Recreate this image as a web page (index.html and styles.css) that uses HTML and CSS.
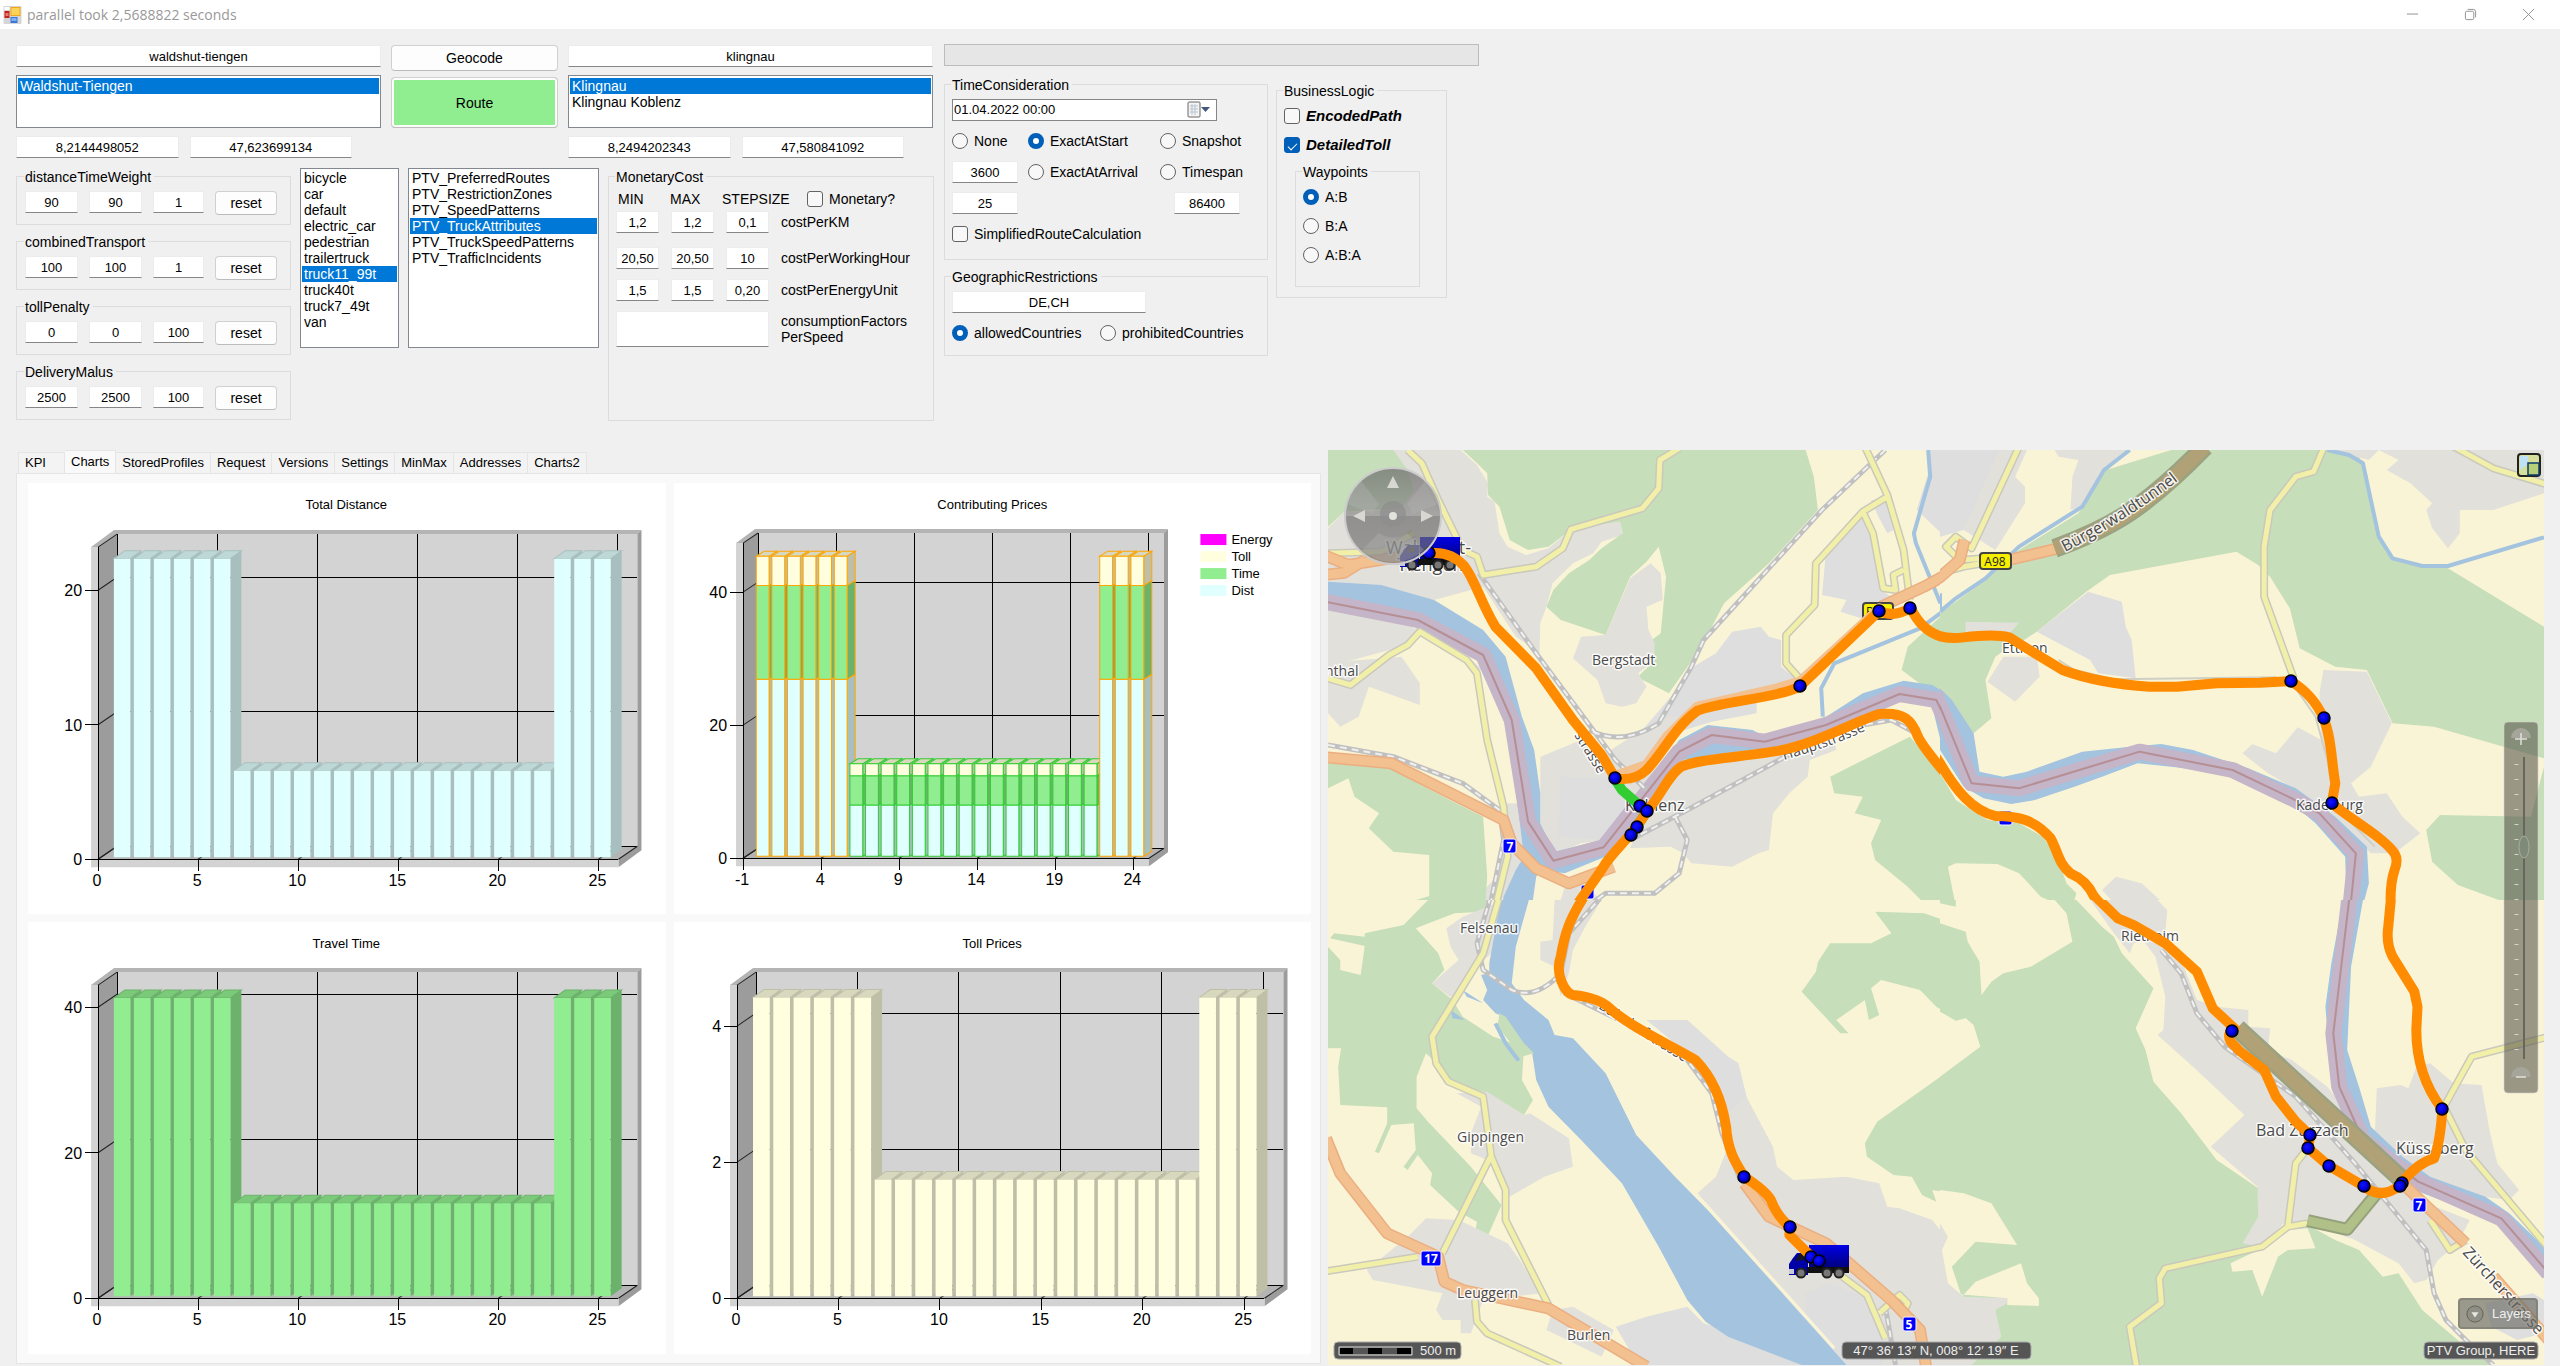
FILE: index.html
```html
<!DOCTYPE html>
<html lang="en">
<head>
<meta charset="utf-8">
<title>parallel took 2,5688822 seconds</title>
<link rel="stylesheet" href="styles.css">
</head>
<body>
<header class="titlebar">
  <svg class="app-icon" viewBox="0 0 18 18" aria-hidden="true">
    <rect x="0" y="0" width="18" height="18" rx="1" fill="#d5d5d5"/>
    <rect x="1" y="1" width="5" height="3" fill="#fff"/>
    <rect x="7" y="1" width="10" height="9" fill="#f0a818"/><rect x="8" y="2" width="8" height="7" fill="#fbd35b"/>
    <rect x="1" y="5" width="5" height="7" fill="#c0241c"/><rect x="2" y="7" width="3" height="3" fill="#ef7a6c"/>
    <rect x="7" y="11" width="7" height="6" fill="#3c76d8"/><rect x="8" y="12" width="5" height="3" fill="#7fb0f4"/>
  </svg>
  <h1 class="title">parallel took 2,5688822 seconds</h1>
  <div class="window-buttons">
    <button type="button" aria-label="Minimize"><svg viewBox="0 0 14 14"><path d="M1 6.500h12"/></svg></button>
    <button type="button" aria-label="Restore"><svg viewBox="0 0 14 14"><rect x="1.500" y="3.500" width="9" height="9" rx="1.500"/><path d="M4 1.500h6a2.500 2.500 0 0 1 2.500 2.500v6"/></svg></button>
    <button type="button" aria-label="Close"><svg viewBox="0 0 14 14"><path d="M1 1l12 12M13 1L1 13"/></svg></button>
  </div>
</header>

<form class="controls">
  <div class="inputs">
    <div class="places">
      <div class="place">
        <input class="box" aria-label="Start" value="waldshut-tiengen">
        <select class="list place-list" size="3" aria-label="Start results"><option selected>Waldshut-Tiengen</option></select>
        <div class="coords"><input class="box" aria-label="Start longitude" value="8,2144498052"><input class="box" aria-label="Start latitude" value="47,623699134"></div>
      </div>
      <div class="actions">
        <button type="button" class="btn">Geocode</button>
        <button type="button" class="btn route">Route</button>
      </div>
      <div class="place">
        <input class="box" aria-label="Destination" value="klingnau">
        <select class="list place-list" size="3" aria-label="Destination results"><option selected>Klingnau</option><option>Klingnau Koblenz</option></select>
        <div class="coords"><input class="box" aria-label="Destination longitude" value="8,2494202343"><input class="box" aria-label="Destination latitude" value="47,580841092"></div>
      </div>
    </div>
    <div class="profile">
      <div class="weights">
        <fieldset><legend>distanceTimeWeight</legend><div class="weight"><input class="box" aria-label="min" value="90"><input class="box" aria-label="max" value="90"><input class="box" aria-label="step" value="1"><button type="button" class="btn reset">reset</button></div></fieldset>
        <fieldset><legend>combinedTransport</legend><div class="weight"><input class="box" aria-label="min" value="100"><input class="box" aria-label="max" value="100"><input class="box" aria-label="step" value="1"><button type="button" class="btn reset">reset</button></div></fieldset>
        <fieldset><legend>tollPenalty</legend><div class="weight"><input class="box" aria-label="min" value="0"><input class="box" aria-label="max" value="0"><input class="box" aria-label="step" value="100"><button type="button" class="btn reset">reset</button></div></fieldset>
        <fieldset><legend>DeliveryMalus</legend><div class="weight"><input class="box" aria-label="min" value="2500"><input class="box" aria-label="max" value="2500"><input class="box" aria-label="step" value="100"><button type="button" class="btn reset">reset</button></div></fieldset>
      </div>
      <select class="list tall vehicles" size="11" aria-label="Vehicle profile">
        <option>bicycle</option><option>car</option><option>default</option><option>electric_car</option><option>pedestrian</option><option>trailertruck</option><option selected>truck11_99t</option><option>truck40t</option><option>truck7_49t</option><option>van</option>
      </select>
      <select class="list tall layers-list" size="11" aria-label="Feature layers">
        <option>PTV_PreferredRoutes</option><option>PTV_RestrictionZones</option><option>PTV_SpeedPatterns</option><option selected>PTV_TruckAttributes</option><option>PTV_TruckSpeedPatterns</option><option>PTV_TrafficIncidents</option>
      </select>
      <fieldset class="monetary"><legend>MonetaryCost</legend>
        <div class="cost-head"><span>MIN</span><span>MAX</span><span class="step">STEPSIZE</span><label class="check"><input type="checkbox">Monetary?</label></div>
        <div class="cost first"><input class="box" aria-label="cost per km min" value="1,2"><input class="box" aria-label="cost per km max" value="1,2"><input class="box" aria-label="cost per km step" value="0,1"><span>costPerKM</span></div>
        <div class="cost"><input class="box" aria-label="cost per hour min" value="20,50"><input class="box" aria-label="cost per hour max" value="20,50"><input class="box" aria-label="cost per hour step" value="10"><span>costPerWorkingHour</span></div>
        <div class="cost"><input class="box" aria-label="energy min" value="1,5"><input class="box" aria-label="energy max" value="1,5"><input class="box" aria-label="energy step" value="0,20"><span>costPerEnergyUnit</span></div>
        <div class="cost"><textarea class="box factors" id="factors"></textarea><label for="factors">consumptionFactors<br>PerSpeed</label></div>
      </fieldset>
    </div>
  </div>

  <div class="options">
    <div class="progress" role="progressbar" aria-label="Progress"></div>
    <div class="option-columns">
      <div class="option-stack">
        <fieldset><legend>TimeConsideration</legend>
          <div class="time-grid">
            <div class="date"><input aria-label="Start time" value="01.04.2022 00:00">
              <button type="button" aria-label="Open calendar"><svg viewBox="0 0 26 18"><rect x="1" y="1" width="12" height="15" rx="1" fill="#f4f4f4" stroke="#6d6866"/><path d="M3 5h8M3 8h8M3 11h8M5 3v11M8 3v11" stroke="#b9c3cf" fill="none"/><path d="M14 6h9l-4.500 5z" fill="#44587c"/></svg></button></div>
            <label class="check"><input type="radio" name="time">None</label>
            <label class="check"><input type="radio" name="time" checked>ExactAtStart</label>
            <label class="check"><input type="radio" name="time">Snapshot</label>
            <input class="box" aria-label="Duration" value="3600">
            <label class="check"><input type="radio" name="time">ExactAtArrival</label>
            <label class="check"><input type="radio" name="time">Timespan</label>
            <input class="box" aria-label="Count" value="25">
            <input class="box span-value" aria-label="Timespan seconds" value="86400">
            <label class="check wide"><input type="checkbox">SimplifiedRouteCalculation</label>
          </div>
        </fieldset>
        <fieldset><legend>GeographicRestrictions</legend>
          <div class="geo">
            <input class="box" aria-label="Countries" value="DE,CH">
            <div class="geo-row"><label class="check"><input type="radio" name="geo" checked>allowedCountries</label><label class="check"><input type="radio" name="geo">prohibitedCountries</label></div>
          </div>
        </fieldset>
      </div>
      <fieldset class="business"><legend>BusinessLogic</legend>
        <div class="stack">
          <label class="check strong"><input type="checkbox">EncodedPath</label>
          <label class="check strong"><input type="checkbox" checked>DetailedToll</label>
          <fieldset class="waypoints"><legend>Waypoints</legend>
            <div class="stack">
              <label class="check"><input type="radio" name="way" checked>A:B</label>
              <label class="check"><input type="radio" name="way">B:A</label>
              <label class="check"><input type="radio" name="way">A:B:A</label>
            </div>
          </fieldset>
        </div>
      </fieldset>
    </div>
  </div>
</form>

<main class="results">
  <section class="tabs">
    <div class="tablist" role="tablist">
      <button type="button" role="tab" class="kpi">KPI</button><button type="button" role="tab" class="active" aria-selected="true">Charts</button><button type="button" role="tab">StoredProfiles</button><button type="button" role="tab">Request</button><button type="button" role="tab">Versions</button><button type="button" role="tab">Settings</button><button type="button" role="tab">MinMax</button><button type="button" role="tab">Addresses</button><button type="button" role="tab">Charts2</button>
    </div>
    <div class="tabpage" role="tabpanel">
      <svg class="chart" id="distance" viewBox="0 0 637 431"></svg>
      <svg class="chart" id="prices" viewBox="0 0 637 431"></svg>
      <svg class="chart" id="time" viewBox="0 0 637 431"></svg>
      <svg class="chart" id="toll" viewBox="0 0 637 431"></svg>
    </div>
  </section>

  <section class="map-pane">
  <svg class="map" viewBox="0 0 1216 915" role="img" aria-label="Map of Koblenz and surroundings">
    <defs>
      <radialGradient id="ball" cx=".4" cy=".4" r=".6"><stop offset="0" stop-color="#1212ff"/><stop offset=".6" stop-color="#0000e0"/><stop offset="1" stop-color="#000060"/></radialGradient>
      <linearGradient id="trailer" x1="0" y1="0" x2="0" y2="1"><stop offset="0" stop-color="#0000e6"/><stop offset="1" stop-color="#000080"/></linearGradient>
      <linearGradient id="glass" x1="0" y1="0" x2="0" y2="1"><stop offset="0" stop-color="#666"/><stop offset=".5" stop-color="#8a8a8a"/><stop offset=".5" stop-color="#6a6a6a"/><stop offset="1" stop-color="#777"/></linearGradient>
      <g id="dot"><circle r="6" fill="url(#ball)" stroke="#000" stroke-width="1.500"/></g>
      <g id="truck">
        <rect x="20" y="0" width="40" height="22" fill="url(#trailer)"/>
        <path d="M0 30V19l4-6 4-5h11v22z" fill="#0000a8"/><path d="M6 16l4-7h5v6z" fill="#15152a"/>
        <path d="M18 22h42v6H18z" fill="#111"/><path d="M0 24h5v5H0z" fill="#c9c9d8"/>
        <g fill="#777" stroke="#222" stroke-width="2"><circle cx="12" cy="28" r="4.500"/><circle cx="38" cy="28" r="4.500"/><circle cx="50" cy="28" r="4.500"/></g>
      </g>
    </defs>
    <rect width="1216" height="915" class="land"/>

    <svg class="tile" x="0" y="0" width="612" height="450" viewBox="20 30 1499 1350" preserveAspectRatio="none">
      <path class="urban" d="M180,30H345L385,75 412,130 410,170 428,185 440,280 460,320 505,345 560,325 620,265 735,245 742,285 690,305 670,340 620,370 570,430 555,500 540,550 538,640 480,590 400,440 280,480 20,425V265L60,215 200,210Z"/>
      <path class="forest" d="M20,30H180L215,90 230,150 200,205 60,215 20,260Z"/>
      <path class="forest" d="M350,30H1190L1210,110 1220,210 1100,370 990,490 935,620 855,760 778,712 820,660 808,605 835,580 848,410 830,320 800,365 760,410 700,585 590,540 555,500 572,450 610,400 660,360 690,325 742,280 735,245 620,265 560,320 510,330 465,300 440,200 412,165 410,100 385,70Z"/>
      <path class="urban" d="M810,370L835,400 840,480 800,500 805,570 820,610 820,660 780,700 800,740 775,790 740,800 700,790 680,720 620,655 640,590 700,585 760,415Z"/>
      <path class="industry" d="M860,770L915,680 970,640 1010,575 1080,560 1100,590 1130,600 1130,680 1165,715 1070,750V820L960,845 840,890 790,870Z"/>
      <path class="industry" d="M1240,330L1330,220 1350,250 1372,450 1400,470 1340,540 1275,515 1290,480 1230,465ZM1350,180L1385,180 1405,270 1390,280 1368,230ZM1495,30H1600V290L1540,300 1462,210 1490,100Z"/>
      <path class="forest" d="M1600,470L1520,530 1440,620 1425,690 1480,740 1600,800Z"/>
      <path class="urban" d="M1260,900L1265,930 1200,960 1195,1010 1150,1060 1110,1120 1100,1230 1075,1240 1010,1280 910,1270 890,1240 860,1220 760,1225 800,1100 900,950Z"/>
      <path class="urban" d="M540,950L640,900 700,940 840,830 900,830 760,1100 700,1200 640,1210 580,1240 540,1150Z"/>
      <path class="industry" d="M590,1010L740,1015 770,1090 690,1200 650,1195 585,1190Z"/>
      <path class="urban" d="M20,510L60,610 50,665 100,660 200,650 245,730V795L165,760 120,740 95,830 50,860 20,820Z"/>
      <path class="urban" d="M20,500L200,545 330,620 400,690 385,690 250,580 200,620 20,680Z"/>
      <path class="urban" d="M450,1090H490L510,1250 470,1380H380L440,1300ZM590,1380L600,1340 640,1330 700,1390Z"/>
      <path class="forest" d="M1445,890L1250,1010 1260,1060 1330,1070 1310,1120 1375,1140 1350,1210 1360,1260 1440,1340 1480,1390H1600V1100Z"/>
      <path class="forest" d="M20,970L170,985 310,1075 400,1130 410,1310 405,1400H210V1390L268,1368V1245L180,1235 120,1165 145,1120 85,1070 70,1015 20,1045Z"/>
      <path class="water" d="M20,425L150,435 280,480 400,570 455,650 475,740 495,830 525,930 540,1060V1150L575,1235 690,1200 760,1120 810,1020 880,900 950,855 1060,870 1090,890 1240,830 1330,760 1430,722 1500,735 1560,780 1600,860V1100L1560,1020 1520,900 1500,800 1420,780 1240,870 1090,925 960,945 890,960 850,1020 800,1120 720,1240 600,1300 540,1290 530,1310 515,1440H445L450,1370 480,1290 500,1250 490,1150 460,850 390,660 240,560 20,505Z"/>
      <path class="border-band" d="M0,482L240,540 400,645 470,840 510,1145 572,1262 695,1222 880,935 960,885 1090,905 1240,855 1420,762 1510,780 1580,960"/>
      <path class="border-line" d="M0,482L240,540 400,645 470,840 510,1145 572,1262 695,1222 880,935 960,885 1090,905 1240,855 1420,762 1510,780 1580,960"/>
      <path class="stream" d="M1490,30L1495,110 1455,280 1460,310 1520,490M1600,420L1525,515 1470,565 1260,670 1228,745 1232,830"/>
      <g id="rail-nw"><path d="M1385,30L1230,210 940,600 910,680 830,850Q740,920 660,870M390,400L530,640 724,960 800,1050M20,915L180,950 350,1030 440,1110 450,1200 410,1440M760,1200L900,1110 1260,870 1400,840 1460,880M870,1130L900,1200 880,1300 820,1360 700,1360 620,1430"/></g>
      <use href="#rail-nw" class="rail"/><use href="#rail-nw" class="ties"/>
      <g id="yellow-nw"><path d="M215,30L250,70 290,180 350,330 385,350 400,405 530,380 595,325 615,268 790,205 830,145 833,60 880,25M20,340L150,335 230,280M20,715L75,735 170,645 215,615 245,575 360,660 385,700 410,900 450,1100 460,1250 430,1400M1335,20L1390,165 1430,330 1445,480M1390,170L1330,215 1215,370 1212,495 1142,585 1142,670 1175,715M1330,215L1355,280 1380,445 1410,450 1405,405 1430,390M1600,260L1560,290 1535,320 1560,355"/></g>
      <use href="#yellow-nw" class="yellow-case"/><use href="#yellow-nw" class="yellow"/>
      <g id="orange-nw"><path d="M10,345L70,375 200,350M10,405L60,398 110,360M0,950L175,970 450,1140 470,1210 530,1285 610,1330 720,1280M1375,500L1480,440 1600,360"/></g>
      <use href="#orange-nw" class="orange-case"/><use href="#orange-nw" class="orange"/>
    </svg>

    <svg class="tile" x="612" y="0" width="604" height="450" viewBox="0 30 1528 1350" preserveAspectRatio="none">
      <path class="forest" d="M585,30H980L1060,50 1080,100 1110,290 1145,358 1285,385 1528,560V955L1250,860 1145,850 1080,690 1000,680 910,625 885,505 835,410 805,375 750,335 430,405 370,455 245,575 200,610H0V520L115,420 200,330 350,220 420,90Z"/>
      <path class="industry" d="M0,30H150L140,120 60,270 0,290Z"/>
      <path class="urban" d="M150,30H220L190,110 215,140 215,190 140,330 60,270ZM290,30H480L410,90 360,200 330,210 335,110 350,60 300,50Z"/>
      <path class="industry" d="M375,455L460,485 470,560 485,600 495,715 400,700 380,660 245,575Z"/>
      <path class="urban" d="M985,30L1085,60 1110,30ZM1110,30L1160,60 1130,90 1190,130 1245,190 1230,210 1245,265 1285,325 1315,280V210H1400L1528,160V30Z"/>
      <path class="urban" d="M65,545L200,548 170,590H65ZM160,650H245L252,710 190,785 120,725Z"/>
      <path class="forest" d="M0,600H200L140,650 115,720 130,835 85,880 40,820 0,740Z"/>
      <path class="urban" d="M970,690L1080,695 1143,850 1090,980 1040,1030 1060,1070 1130,1060 1170,1130 1215,1180 1150,1240H1090L1000,1130 900,1050 830,1000 765,940 790,912 850,940 905,862 965,900 960,760Z"/>
      <path class="forest" d="M1265,1125L1495,1130 1528,980V1430L1310,1335 1245,1265 1230,1170Z"/>
      <path class="forest" d="M0,1000L40,1080 120,1140 200,1150 260,1190 300,1260 320,1330 345,1360 340,1380 390,1440H330L300,1395 255,1370 200,1300 145,1272 40,1270 20,1280 40,1400 0,1390Z"/>
      <path class="urban" d="M445,1310L510,1330 575,1400V1440H480L410,1350Z"/>
      <path class="water" d="M0,745L30,780 85,880 100,995 160,1010 220,995 360,935 480,920 560,912 640,930 780,985 900,1045 1000,1130 1080,1220 1085,1330 1060,1440H1030L1025,1250 950,1150 880,1080 740,1000 500,970 410,1010 340,1040 240,1080 180,1092 110,1075 60,1040 0,930Z"/>
      <path class="border-band" d="M-60,640L0,800 80,1030 200,1045 505,935 740,990 890,1075 960,1120 1052,1240 1035,1440"/>
      <path class="border-line" d="M-60,640L0,800 80,1030 200,1045 505,935 740,990 890,1075 960,1120 1052,1240 1035,1440"/>
      <path class="stream" d="M480,30L415,90 360,200 200,320 115,415 40,475 0,515M980,30L1035,45 1070,70 1110,290 1145,355 1220,378H1285L1528,292M0,460L0,515"/>
      <g id="yellow-ne"><path d="M200,20L80,325 40,290 15,320 50,360 110,355M0,400L60,380 110,370M972,20L945,95 900,110 835,210 820,320V470L895,715M1300,20L1400,85 1540,135"/></g>
      <use href="#yellow-ne" class="yellow-case"/><use href="#yellow-ne" class="yellow"/>
      <path class="lane" d="M300,660L340,690 440,718 850,712M900,745L950,830 980,960 1000,1100 1100,1220"/>
      <g id="orange-ne"><path d="M-40,440L0,412 50,360 62,300M180,358L300,325"/></g>
      <use href="#orange-ne" class="orange-case"/><use href="#orange-ne" class="orange"/>
      <path class="tunnel-case" d="M290,325Q420,270 500,200T670,20"/><path class="tunnel" d="M290,325Q420,270 500,200T670,20"/>
    </svg>

    <svg class="tile" x="0" y="450" width="612" height="465" viewBox="20 0 1499 1395" preserveAspectRatio="none">
      <path class="forest" d="M265,0H410L400,35 330,40 235,85 290,160 305,210 275,250 325,300 350,350 425,410 500,440 495,540 522,600 500,645 410,580 320,545 285,490 260,460 237,530V625L265,665 370,800 445,915 405,1025 380,1000 385,965 340,935 270,855 275,820 240,765 215,810 205,800 235,750 230,670 175,675 145,760 135,755 165,670V622L50,615 45,500 52,445H20V140L50,180V210L100,225 110,138 25,115 35,100 110,110V100L205,75Z"/>
      <path class="urban" d="M310,85L350,50 410,20 450,0 430,150 410,170 330,300 275,250 340,180 320,140Z"/>
      <path class="urban" d="M335,580L410,575 500,645 515,640 610,715 620,800 550,830 465,890 430,790 370,760V700L395,620ZM260,955L340,960 460,1030 490,1080 540,1180 400,1200 370,1300H345V1260H300L285,1230 300,1180 130,1140 115,1110 215,1010ZM570,1230L620,1220 720,1290 690,1370 555,1290Z"/>
      <path class="industry" d="M725,1280L800,1250 900,1220 940,1270 1100,1330 1200,1395H780Z"/>
      <path class="urban" d="M575,0H690L650,80 620,150 610,220 590,290 575,200 540,180V125L570,120Z"/>
      <path class="urban" d="M820,370L900,360 1000,470 1025,490 1045,590 1110,740 1120,800 1160,840 1290,830 1370,850 1390,920 1420,925 1500,960 1540,1020V1395H1280L925,880 970,830 1000,740 970,580 900,470Z"/>
      <path class="industry" d="M800,360L900,360 1000,470 1025,490 1045,590 1000,640 940,500ZM1190,1180L1250,1150 1330,1190 1380,1320V1395H1290L1190,1270Z"/>
      <path class="forest" d="M1360,35L1480,40 1600,90V370L1560,360 1510,320 1470,270 1375,240 1350,265 1370,345 1345,360 1335,300 1265,360 1295,400H1275L1180,275 1215,215 1220,185 1250,130H1350L1400,100ZM1600,460L1365,665 1335,730 1340,770 1405,825 1450,830 1475,885 1510,905 1500,870 1600,890ZM1600,1050L1545,1100 1600,1200Z"/>
      <path class="water" d="M443,0H512L480,140 470,250 500,300 560,360 575,405 620,415 700,520 775,705 870,830 950,930 1290,1395H1180L1000,1310 945,1265 900,1200 830,1040 740,850 640,720 560,620 530,540 520,460 490,420 450,350 430,340 400,300 410,270 395,225 415,220V190ZM350,270L400,310 360,290ZM320,330L355,360 325,355Z"/>
      <path class="forest" d="M440,340L455,350 500,430 525,460 495,470 435,380Z"/><path class="stream" d="M430,370L455,430 487,482"/>
      <path class="shore" d="M870,820L950,920 1260,1345"/>
      <g id="rail-sw"><path d="M418,-10L385,130 400,210 470,270Q530,300 590,220L610,100 690,-10M600,280L750,370 900,480 960,580 985,700 1030,840M1385,1220L1410,1395"/></g>
      <use href="#rail-sw" class="rail"/><use href="#rail-sw" class="ties"/>
      <g id="yellow-sw"><path d="M442,-20L400,160 275,410 285,490 315,545 400,590 420,770 455,870V960L560,1215M418,770L300,1060M10,1115L240,1070M380,1200L385,1265 410,1300 590,1400M1280,1130L1340,1185 1385,1315M1370,1240L1420,1185 1440,1210 1430,1235"/></g>
      <use href="#yellow-sw" class="yellow-case"/><use href="#yellow-sw" class="yellow"/>
      <g id="orange-sw"><path d="M15,715L50,820 165,1000 290,1070 305,1145 350,1170 560,1225 800,1400M1040,850L1100,950 1240,1030 1400,1200 1470,1290 1485,1400"/></g>
      <use href="#orange-sw" class="orange-case"/><use href="#orange-sw" class="orange"/>
    </svg>

    <svg class="tile" x="612" y="450" width="604" height="465" viewBox="0 0 1528 1395" preserveAspectRatio="none">
      <path class="forest" d="M0,0H345L410,80 440,110 460,160 540,265 495,385 520,450 540,545 610,640 700,780 805,865 808,950 770,1030 930,975 1000,1020 1060,1050 1120,1130 1160,1120 1220,1230 1330,1340 1400,1395H0Z"/>
      <path class="land" d="M0,70L65,95 70,125 100,185 105,285 130,245 160,220 230,200 335,125 320,40 290,0H40V20L0,10ZM0,335L40,362 65,355 85,375 102,440 0,530ZM0,870L60,880 130,910 195,1035 90,1025 30,1100 55,1190 90,1145 205,1090 220,1150 250,1195V1218L170,1215V1195L20,1180 0,1140ZM735,1090L815,1045 880,990 930,985 950,1045 880,1050 855,1070 815,1190 790,1110 740,1115ZM1400,0H1528V60L1480,40Z"/>
      <path class="urban" d="M0,970L20,1010 5,1050 20,1150 60,1190 170,1195V1210L140,1230 155,1310 80,1395H0ZM380,0H550L575,30 570,100 490,130 480,160 440,100ZM500,100L600,150 650,300 700,320 780,330V380L835,385 830,450 890,480 980,560 1060,680 1100,740 1170,830 1230,910 1340,960 1310,1030 1260,1080 1230,1140 1200,1150 1160,1090 1050,1020 930,970 870,970 810,1040 765,1030 805,950 803,860 685,740 770,645 640,500 550,405 565,390 570,290 545,170ZM1105,565L1165,555 1185,565 1205,500 1240,490 1300,550 1370,555 1390,690 1410,790 1465,870 1440,900 1300,880 1180,790 1100,700Z"/>
      <path class="industry" d="M1380,1210L1500,1180 1528,1200V1300L1460,1320 1395,1280Z"/>
      <path class="water" d="M1020,0H1070L1040,200 1030,450 1060,560 1090,680 1170,770 1240,830 1380,890 1440,940 1528,1040V1130L1400,960 1200,870 1060,720 990,540 975,320 990,190Z"/>
      <path class="border-band" d="M1037,-20L1005,300 995,400 1010,560 1070,720 1210,845 1420,955 1540,1120"/>
      <path class="border-line" d="M1037,-20L1005,300 995,400 1010,560 1070,720 1210,845 1420,955 1540,1120"/>
      <g id="rail-se"><path d="M560,150L610,220 650,340 720,440 900,590 1050,790 1230,1050 1250,1180 1280,1260 1330,1320 1400,1395"/></g>
      <use href="#rail-se" class="rail"/><use href="#rail-se" class="ties"/>
      <g id="yellow-se"><path d="M1540,410L1345,470 1275,620 1330,750 1540,1045M930,970L880,980 815,1040 570,1105 555,1135 560,1210 480,1280 497,1400M930,745L900,790 880,980M1240,960L1290,1050 1330,1020"/></g>
      <use href="#yellow-se" class="yellow-case"/><use href="#yellow-se" class="yellow"/>
      <path class="green-case" d="M930,962L1030,988 1105,880"/><path class="green-road" d="M930,962L1030,988 1105,880"/>
      <g id="orange-se"><path d="M1170,850L1330,1030M1400,1130L1540,1320"/></g>
      <use href="#orange-se" class="orange-case"/><use href="#orange-se" class="orange"/>
      <path class="tunnel-case" d="M752,385L1165,835"/><path class="tunnel" d="M752,385L1165,835"/>
    </svg>

    <g class="labels">
      <path id="p-tunnel" d="M737,102Q800,70 856,26" class="guide"/>
      <path id="p-zurich" d="M1134,803L1215,892" class="guide"/>
      <path id="p-bahn" d="M270,558Q320,590 372,622" class="guide"/>
      <path id="p-haupt" d="M456,310Q510,295 556,272" class="guide"/>
      <path id="p-str" d="M246,285L280,340" class="guide"/>
      <text x="58" y="104" class="big">Waldshut-</text><text x="69" y="121" class="big">Tiengen</text>
      <text x="264" y="215">Bergstadt</text><text x="-3" y="226">nthal</text>
      <text x="297" y="361" class="mid">Koblenz</text><text x="968" y="360">Kadelburg</text>
      <text x="674" y="203">Ettikon</text><text x="132" y="483">Felsenau</text>
      <text x="129" y="692">Gippingen</text><text x="129" y="848">Leuggern</text>
      <text x="239" y="890">Burlen</text><text x="793" y="491">Rietheim</text>
      <text x="928" y="686" class="mid">Bad Zurzach</text><text x="1068" y="704" class="mid">Küssaberg</text>
      <text class="mid"><textPath href="#p-tunnel">Bürgerwaldtunnel</textPath></text>
      <text class="mid"><textPath href="#p-zurich">Zürcherstrasse</textPath></text>
      <text><textPath href="#p-bahn">Bahnhofstrasse</textPath></text>
      <text><textPath href="#p-haupt">Hauptstrasse</textPath></text>
      <text><textPath href="#p-str">strasse</textPath></text>
    </g>

    <g class="shields">
      <g class="blue"><rect x="175" y="389" width="13" height="14" rx="2"/><rect x="253" y="435" width="13" height="14" rx="2"/><rect x="671" y="361" width="13" height="14" rx="2"/><rect x="93" y="801" width="20" height="15" rx="2"/><rect x="575" y="867" width="13" height="14" rx="2"/><rect x="1085" y="748" width="13" height="14" rx="2"/></g>
      <text x="182" y="401">7</text><text x="103" y="813">17</text><text x="581" y="879">5</text><text x="1091" y="760">7</text>
      <g class="gold"><rect x="652" y="103" width="31" height="16" rx="3"/><rect x="535" y="153" width="30" height="16" rx="3"/></g>
      <text x="667" y="116" class="dark">A98</text><text x="542" y="166" class="dark">B</text>
    </g>

    <use href="#truck" x="72" y="87"/><use href="#truck" x="461" y="795"/>

    <g class="routes">
      <svg x="0" y="0" width="612" height="450" viewBox="20 30 1499 1350" preserveAspectRatio="none">
        <path class="shadow" d="M730,1005L800,975 850,890 925,800 1120,745 1176,725 1371,505"/>
        <path class="done" d="M724,1020L740,1050 784,1097 802,1112 776,1161"/>
        <path d="M268,340C300,335 330,345 355,380C380,420 395,490 430,560L530,685 620,840 690,945 724,1015Q770,1025 800,990C840,940 870,860 925,812C970,790 1060,780 1120,762Q1160,750 1176,739L1371,512Q1405,535 1447,503Q1480,590 1550,596L1600,590M600,1450C640,1370 670,1330 700,1270C730,1220 770,1180 802,1112C840,1060 850,1010 885,980C920,960 1000,955 1110,935C1200,920 1300,850 1370,822C1430,815 1450,840 1465,890C1480,930 1520,980 1575,1065"/>
      </svg>
      <svg x="612" y="0" width="604" height="450" viewBox="0 30 1528 1350" preserveAspectRatio="none">
        <path d="M-30,575Q10,600 60,592C110,585 150,585 175,592L240,640 310,690Q400,730 530,740H600L700,730 810,728 887,723Q945,765 970,834C990,890 990,960 1000,1030L991,1090C1040,1140 1120,1190 1150,1240Q1160,1260 1150,1290Q1135,1340 1142,1440M-50,880L0,970C40,1050 80,1110 140,1128C200,1128 240,1140 280,1195C300,1240 300,1270 330,1300C350,1310 375,1330 390,1370Q410,1400 455,1440"/>
      </svg>
      <svg x="0" y="450" width="612" height="465" viewBox="20 0 1499 1395" preserveAspectRatio="none">
        <path d="M652,-20C610,60 600,100 590,170C575,220 600,280 620,285C660,290 690,300 710,325C760,380 850,430 920,480C960,530 985,600 995,680C1000,760 1020,790 1040,831Q1090,870 1105,900Q1120,950 1152,981L1150,1005 1204,1070 1222,1084"/>
      </svg>
      <svg x="612" y="450" width="604" height="465" viewBox="0 0 1528 1395" preserveAspectRatio="none">
        <path d="M385,-20L450,55 490,75 570,130 650,215 690,325 745,385Q725,400 735,425L760,455 820,510 850,590 900,665 937,706 931,744 983,797 1073,859Q1115,900 1163,857L1168,850Q1205,790 1250,775Q1265,730 1271,628C1220,550 1205,470 1205,390L1208,320 1200,275 1145,170Q1128,130 1134,80L1142,-20"/>
      </svg>
    </g>
    <g class="dots">
      <use href="#dot" x="101" y="103"/><use href="#dot" x="287" y="328"/><use href="#dot" x="312" y="356"/><use href="#dot" x="319" y="361"/><use href="#dot" x="309" y="377"/><use href="#dot" x="303" y="385"/><use href="#dot" x="472" y="236"/><use href="#dot" x="551" y="161"/><use href="#dot" x="582" y="158"/><use href="#dot" x="963" y="231"/><use href="#dot" x="996" y="268"/><use href="#dot" x="1004" y="353"/><use href="#dot" x="904" y="581"/><use href="#dot" x="982" y="685"/><use href="#dot" x="980" y="698"/><use href="#dot" x="1001" y="716"/><use href="#dot" x="1036" y="736"/><use href="#dot" x="1074" y="733"/><use href="#dot" x="1072" y="736"/><use href="#dot" x="1114" y="659"/><use href="#dot" x="416" y="727"/><use href="#dot" x="462" y="777"/><use href="#dot" x="483" y="807"/><use href="#dot" x="491" y="811"/>
    </g>

    <g class="compass" transform="translate(65 66)">
      <circle r="48" fill="url(#glass)" fill-opacity=".68" stroke="#ccc" stroke-width="2"/>
      <path d="M-32-35L-14-12A19 19 0 0 0-19-2L-46-12A48 48 0 0 1-32-35ZM32-35L14-12A19 19 0 0 1 19-2L46-12A48 48 0 0 0 32-35ZM-31 34L-14 17Q0 26 14 17L31 34A46 46 0 0 1-31 34Z" fill="#bbb" fill-opacity=".3"/>
      <circle r="13" cy="-2" fill="#8d8d8d" fill-opacity=".7"/><circle r="4" fill="#e2e2dc"/>
      <path d="M0-40L6-28H-6ZM-40 0L-28-6V6ZM40 0L28-6V6Z" fill="#d8d8d2"/>
    </g>

    <g class="zoom">
      <rect x="1176" y="272" width="34" height="371" rx="4" fill="#55554a" fill-opacity=".58" stroke="#cfcfc4" stroke-opacity=".6"/>
      <path d="M1183 288a10 10 0 0 1 20 0zM1183 627a10 10 0 0 1 20 0z" fill="#a5a59a"/>
      <path d="M1193 283v12M1187 289h12M1188 627h10" stroke="#e0e0da" stroke-width="1.500"/>
      <path d="M1196 307v302" stroke="#66665c" stroke-width="2"/>
      <path d="M1188.500 314v290" stroke="#d5d5cb" stroke-width="4" stroke-dasharray="1 14"/>
      <ellipse cx="1196" cy="397" rx="5" ry="11" fill="#7f8a78" stroke="#a7ad9e"/>
    </g>

    <g class="overview">
      <rect x="1190" y="4" width="22" height="22" rx="3" fill="#d6df9c" stroke="#222" stroke-width="2"/>
      <path d="M1192 6h8v8l-8 6z" fill="#bfe2f4"/><rect x="1200" y="13" width="11" height="12" fill="#b6d07a" stroke="#0c3b66" stroke-width="1.500"/>
    </g>

    <g class="badges">
      <rect x="6" y="892" width="127" height="17" rx="4"/><rect x="514" y="892" width="189" height="17" rx="4"/><rect x="1096" y="892" width="114" height="17" rx="4"/>
      <path d="M11 897h73v8h-73z" fill="#555" stroke="#ddd"/><path d="M12 898h13v6h-13zM40 898h14v6h-14zM69 898h14v6h-14z" fill="#000"/>
      <text x="92" y="905">500 m</text><text x="608" y="905" text-anchor="middle">47° 36′ 13″ N, 008° 12′ 19″ E</text><text x="1153" y="905" text-anchor="middle">PTV Group, HERE</text>
    </g>
  </svg>
  <button type="button" class="layers"><svg viewBox="0 0 20 20"><circle cx="10" cy="10" r="9" fill="#8e8e84" stroke="#5f5f57"/><path d="M6 8h8l-4 6z" fill="#e6e6e0"/></svg>Layers</button>
  </section>
</main>
<script src="charts.js"></script>
</body>
</html>
```
FILE: styles.css
```css
* { box-sizing: border-box; }
body { margin: 0; background: #f0f0f0; font: 14px/16px "Liberation Sans", Arial, sans-serif; color: #000; }
input, select, button, textarea { font: inherit; color: inherit; margin: 0; }

.titlebar { display: flex; align-items: center; gap: 5px; height: 29px; padding: 0 3px; background: #fff; }
.app-icon { width: 19px; height: 18px; }
.title { margin: 0; flex: 1; font: 14px/20px "Open Sans", "Noto Sans", sans-serif; color: #999; }
.window-buttons { display: flex; }
.window-buttons button { width: 58px; height: 28px; padding: 0; border: 0; background: none; display: grid; place-items: center; }
.window-buttons svg { width: 13px; height: 13px; fill: none; stroke: #8c8c8c; }

.controls { display: flex; gap: 10px; padding: 15px 16px 29px; align-items: flex-start; }
.inputs { display: flex; flex-direction: column; gap: 10px; }
.places { display: flex; gap: 10px; padding-top: 1px; }
.place { display: flex; flex-direction: column; gap: 8px; width: 365px; }
.actions { display: flex; flex-direction: column; gap: 6px; width: 167px; }

.box { width: 100%; min-width: 0; height: 22px; padding: 0 2px; border: 1px solid #ececec; border-bottom-color: #868686; border-radius: 0; background: #fff; font-size: 13px; text-align: center; }
.coords { display: flex; gap: 11px; width: 336px; }
.btn { border: 1px solid #d0d0d0; border-bottom-color: #bcbcbc; border-radius: 4px; background: #fdfdfd; padding: 0; height: 26px; }
.btn.route { height: 51px; background: #90ee90; box-shadow: inset 0 0 0 2px #fdfdfd; }
.btn.reset { height: 24px; }

.list { border: 1px solid #828790; border-radius: 0; background: #fff; padding: 1px; overflow: hidden; scrollbar-width: none; outline: 0; }
.list option { height: 16px; min-height: 16px; padding: 0 2px; line-height: 16px; }
.list option:checked { background: #0078d7 linear-gradient(#0078d7, #0078d7); color: #fff; }
.place-list { height: 53px; padding-top: 2px; }
.tall { height: 180px; }
.vehicles { width: 99px; }
.layers-list { width: 191px; }

fieldset { min-width: 0; margin: 0; padding: 7px 8px 11px; border: 1px solid #dcdcdc; }
legend { padding: 0 3px 0 1px; margin-left: -1px; height: 16px; line-height: 18px; }
.profile { display: flex; gap: 9px; align-items: flex-start; }
.weights { display: flex; flex-direction: column; gap: 8px; width: 275px; }
.weight { display: grid; grid-template-columns: 53px 53px 51px 62px; column-gap: 11px; height: 22px; }
.monetary { width: 326px; min-height: 253px; padding: 7px; }
.cost-head { display: flex; align-items: center; height: 16px; margin-bottom: 4px; padding-left: 2px; }
.cost-head span { width: 52px; }
.cost-head .step { width: 85px; }
.cost { display: grid; grid-template-columns: 43px 43px 43px 1fr; column-gap: 12px; align-items: center; margin-bottom: 10px; }
.cost.first { margin-bottom: 14px; }
.factors { grid-column: span 3; height: 36px; resize: none; display: block; }

.options { display: flex; flex-direction: column; gap: 10px; width: 535px; }
.progress { height: 22px; border: 1px solid #bcbcbc; background: #e6e6e6; }
.option-columns { display: flex; gap: 8px; align-items: flex-start; }
.option-stack { display: flex; flex-direction: column; gap: 8px; width: 324px; }
.option-stack fieldset { padding-left: 7px; padding-right: 7px; }
.time-grid { display: grid; grid-template-columns: 66px 122px 1fr; gap: 9px 10px; padding-bottom: 3px; }
.time-grid > .check:not(.wide) { white-space: nowrap; }
.date { grid-column: 1 / -1; display: flex; width: 265px; height: 22px; border: 1px solid #868686; background: #fff; }
.date input { flex: 1; border: 0; padding: 0 1px; background: none; font-size: 13px; outline: 0; }
.date button { width: 32px; padding: 0; border: 0; background: none; display: grid; place-items: center; }
.date svg { width: 26px; height: 18px; }
.span-value { grid-column: 3; width: 66px; margin-left: 14px; }
.wide { grid-column: 1 / -1; }
.geo { display: flex; flex-direction: column; gap: 9px; }
.geo .box { width: 194px; }
.geo-row { display: grid; grid-template-columns: 148px 1fr; }

.check { display: flex; align-items: center; gap: 6px; height: 22px; }
.check input { appearance: none; flex: none; width: 16px; height: 16px; border: 1px solid #636363; border-radius: 3px; background: #f8f8f8; }
.check input[type="radio"] { border-radius: 50%; }
.check input[type="radio"]:checked { border: 5px solid #005fb8; background: #fff; }
.check input[type="checkbox"]:checked { border-color: #005fb8; background: #005fb8; display: grid; place-items: center; }
.check input[type="checkbox"]:checked::after { content: ""; width: 8px; height: 4px; border: solid #fff; border-width: 0 0 1px 1px; transform: rotate(-45deg); }
.strong { font-size: 15px; font-weight: bold; font-style: italic; }
.business { width: 171px; margin-top: 6px; padding: 7px 7px 10px; }
.stack { display: flex; flex-direction: column; gap: 7px; }
.waypoints { width: 125px; margin-left: 11px; padding: 7px 7px 20px; }

.results { display: grid; grid-template-columns: minmax(0, 1305fr) minmax(0, 1216fr); gap: 7px; padding: 0 16px 1px; align-items: start; }
.tablist { display: flex; align-items: flex-end; padding-left: 2px; height: 23px; }
.tablist button { height: 21px; padding: 0 6px; border: 1px solid #e5e5e5; border-bottom: 0; border-left: 0; background: #f3f3f3; white-space: nowrap; font-size: 13px; }
.tablist .kpi { width: 47px; text-align: left; border-left: 1px solid #e5e5e5; }
.tablist .active { height: 23px; background: #f9f9f9; }
.tabpage { display: grid; grid-template-columns: repeat(2, minmax(0, 1fr)); gap: 8px; padding: 9px 9px 9px 11px; border: 1px solid #e5e5e5; background: #f9f9f9; }
.chart { display: block; width: 100%; background: #fff; font-family: "Liberation Sans", Arial, sans-serif; }
.chart text { font-size: 16px; }
.chart .heading, .chart .key { font-size: 13px; }
.chart .grid { stroke: #000; stroke-width: 1; fill: none; shape-rendering: crispEdges; }
.chart .slant { stroke: #222; stroke-width: 1; }

.map-pane { position: relative; overflow: hidden; }
.map { display: block; width: 100%; }
.map path { vector-effect: non-scaling-stroke; stroke-linejoin: round; }
.tile g { fill: none; }
.land { fill: #faf4d7; }
.forest { fill: #c6deba; }
.urban { fill: #e2e0db; }
.industry { fill: #dedede; }
.water { fill: #a3c3df; }
.border-band { fill: none; stroke: #c4b5c8; stroke-width: 16; }
.border-line { fill: none; stroke: #b58f93; stroke-width: 2; }
.stream { fill: none; stroke: #a3c3df; stroke-width: 4; }
.shore { fill: none; stroke: #faf4d7; stroke-width: 3; }
.lane { fill: none; stroke: #cfcfc4; stroke-width: 2; }
.rail { fill: none; stroke: #c0c0c0; stroke-width: 5; }
.ties { fill: none; stroke: #f0f0ee; stroke-width: 2; stroke-dasharray: 7 5; }
.yellow-case { fill: none; stroke: #c9c8bc; stroke-width: 8; }
.yellow { fill: none; stroke: #f2f0a8; stroke-width: 5; }
.orange-case { fill: none; stroke: #ebae80; stroke-width: 12; }
.orange { fill: none; stroke: #f3c08f; stroke-width: 9; }
.tunnel-case { fill: none; stroke: #9aa281; stroke-width: 19; }
.tunnel { fill: none; stroke: #b0a276; stroke-width: 14; }
.green-case { fill: none; stroke: #95a27c; stroke-width: 13; }
.green-road { fill: none; stroke: #b1bf88; stroke-width: 9; }
.routes path { fill: none; stroke: #ff8c00; stroke-width: 10; stroke-linecap: round; }
.routes .done { stroke: #32cd32; }
.routes .shadow { stroke: #f3c08f; }
.guide { fill: none; stroke: none; }
.labels text { font: 14px "Open Sans", "Noto Sans", sans-serif; fill: #4a4a4a; stroke: #fff; stroke-opacity: .85; stroke-width: 3; paint-order: stroke; stroke-linejoin: round; }
.labels .mid { font-size: 16px; }
.labels .big { font-size: 18px; }
.blue rect { fill: #0000ff; stroke: #f4f4ff; }
.gold rect { fill: #f6f000; stroke: #444; stroke-width: 2; }
.shields text { font: bold 12px "Open Sans", "Noto Sans", sans-serif; fill: #fff; text-anchor: middle; }
.shields .dark { font-weight: normal; fill: #222; }
.badges rect { fill: #555; stroke: #aaa; stroke-width: 1; }
.badges text { font: 13px "Liberation Sans", Arial, sans-serif; fill: #eee; }
.layers { position: absolute; right: 6px; bottom: 36px; width: 80px; height: 31px; padding: 0 6px; display: flex; align-items: center; gap: 8px; border: 2px solid rgba(120, 120, 110, .6); border-radius: 4px; background: rgba(105, 105, 98, .65); color: #eee; font-size: 13px; }
.layers svg { width: 18px; height: 20px; flex: none; }
```
FILE: charts.js
```js
const NS = 'http://www.w3.org/2000/svg';
const CYAN = { front: '#e0ffff', top: '#bed8d8', side: '#a8bfbf' };
const GREEN = { front: '#90ee90', top: '#7aca7a', side: '#6cb26c' };
const CREAM = { front: '#ffffe0', top: '#d8d8be', side: '#bfbfa8' };

function add(svg, name, attrs, text) {
  const el = document.createElementNS(NS, name);
  for (const key in attrs) el.setAttribute(key, attrs[key]);
  if (text !== undefined) el.textContent = text;
  svg.appendChild(el);
  return el;
}
const poly = (svg, pts, fill, stroke) =>
  add(svg, 'polygon', { points: pts.map(p => p.join(',')).join(' '), fill, stroke: stroke || 'none' });

// Hours 7 to 22 are cheap, the remaining ones are expensive.
const isHigh = hour => hour < 7 || hour > 22;

function draw(id, c) {
  const svg = document.getElementById(id);
  const { x0, y0, unit, h, dx, dy } = c;
  const xr = x0 + unit * 26, yt = y0 - h;
  add(svg, 'text', { x: 318, y: 26, 'text-anchor': 'middle', class: 'heading' }, c.title);

  poly(svg, [[x0 + dx, yt - dy], [xr + dx, yt - dy], [xr + dx, y0 - dy], [x0 + dx, y0 - dy]], '#d3d3d3');
  poly(svg, [[x0, yt], [x0 + dx, yt - dy], [x0 + dx, y0 - dy], [x0, y0]], '#9c9c9c');
  poly(svg, [[x0, y0], [x0 + dx, y0 - dy], [xr + dx, y0 - dy], [xr, y0]], '#b4b4b4');
  poly(svg, [[x0 - 7, yt], [x0 + dx - 3, yt - dy - 4], [xr + dx + 4, yt - dy - 4], [xr + dx, yt - dy], [x0 + dx, yt - dy], [x0, yt]], '#b4b4b4');
  poly(svg, [[xr + dx + 4, yt - dy - 4], [xr + dx + 4, y0 - dy + 4], [xr, y0 + 8], [xr, y0], [xr + dx, y0 - dy], [xr + dx, yt - dy]], '#9c9c9c');
  poly(svg, [[x0 - 7, yt], [x0, yt], [x0, y0], [xr, y0], [xr, y0 + 8], [x0 - 7, y0 + 8]], '#d3d3d3');

  for (let i = 0; i <= 5; i++) {
    const x = x0 + unit * 5 * i;
    add(svg, 'path', { d: `M${x + dx} ${yt - dy}V${y0 - dy}M${x} ${y0}v12`, class: 'grid' });
    add(svg, 'path', { d: `M${x} ${y0}l${dx} ${-dy}`, class: 'slant' });
    add(svg, 'text', { x: x - 1, y: y0 + 27, 'text-anchor': 'middle' }, c.start + 5 * i);
  }
  for (let i = 0; i <= 2; i++) {
    const y = y0 - c.scale * c.step * i;
    add(svg, 'path', { d: `M${x0 + dx} ${y - dy}H${xr + dx}M${x0 - 13} ${y}H${x0}`, class: 'grid' });
    add(svg, 'path', { d: `M${x0} ${y}l${dx} ${-dy}`, class: 'slant' });
    add(svg, 'text', { x: x0 - 16, y: y + 6, 'text-anchor': 'end' }, c.step * i);
  }
  add(svg, 'path', { d: `M${x0} ${yt}V${y0}H${xr}`, class: 'grid' });
  add(svg, 'path', { d: `M${x0} ${yt}l${dx} ${-dy}M${xr} ${y0}l${dx} ${-dy}`, class: 'slant' });

  for (let hour = 1; hour <= 25; hour++) {
    const high = isHigh(hour);
    const w = unit * 0.82, bx = x0 + unit * hour - w / 2 + 4;
    const values = high ? c.high : c.low;
    const line = c.outline ? (high ? '#ffa500' : '#32cd32') : null;
    let bottom = y0 - 2;
    values.forEach((value, n) => {
      const top = y0 - 2 - value * c.scale, k = c.colors[n];
      poly(svg, [[bx + w, top], [bx + w + c.bx, top - c.by], [bx + w + c.bx, bottom - c.by], [bx + w, bottom]], k.side, line);
      if (n === values.length - 1)
        poly(svg, [[bx, top], [bx + c.bx, top - c.by], [bx + w + c.bx, top - c.by], [bx + w, top]], k.top, line || k.side);
      poly(svg, [[bx, top], [bx + w, top], [bx + w, bottom], [bx, bottom]], k.front, line);
      bottom = top;
    });
  }
}

draw('distance', { title: 'Total Distance', x0: 70, y0: 376, unit: 20, h: 312, dx: 19, dy: 13, bx: 11, by: 8, start: 0, step: 10, scale: 13.44, high: [22.2], low: [6.44], colors: [CYAN] });
draw('time', { title: 'Travel Time', x0: 70, y0: 376, unit: 20, h: 313, dx: 19, dy: 13, bx: 11, by: 8, start: 0, step: 20, scale: 7.27, high: [41], low: [12.8], colors: [GREEN] });
draw('toll', { title: 'Toll Prices', x0: 63, y0: 376, unit: 20.27, h: 313, dx: 19, dy: 13, bx: 11, by: 8, start: 0, step: 2, scale: 68, high: [4.39], low: [1.715], colors: [CREAM] });
draw('prices', { title: 'Contributing Prices', x0: 69, y0: 375, unit: 15.6, h: 315, dx: 15, dy: 10, bx: 8, by: 5, start: -1, step: 20, scale: 6.65, high: [26.6, 40.7, 45.1], low: [7.7, 12.1, 13.9], colors: [CYAN, GREEN, CREAM], outline: true });

const legend = document.getElementById('prices');
[['Energy', '#ff00ff'], ['Toll', '#ffffe0'], ['Time', '#90ee90'], ['Dist', '#e0ffff']].forEach(([name, color], i) => {
  add(legend, 'rect', { x: 526, y: 51 + 17 * i, width: 26, height: 11, fill: color });
  add(legend, 'text', { x: 557, y: 61 + 17 * i, class: 'key' }, name);
});
```
